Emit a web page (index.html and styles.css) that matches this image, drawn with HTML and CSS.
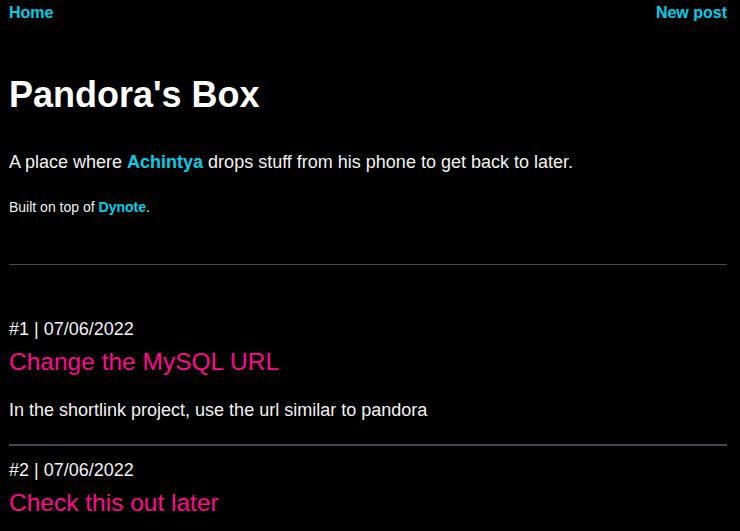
FILE: index.html
```html
<!DOCTYPE html>
<html>
<head>
<meta charset="utf-8">
<link rel="stylesheet" href="styles.css">
</head>
<body>
<div class="page">
  <nav class="nav">
    <a href="#">Home</a>
    <a href="#">New post</a>
  </nav>
  <header class="header">
    <h1 class="title">Pandora's Box</h1>
    <p class="tagline">A place where <a href="#">Achintya</a> drops stuff from his phone to get back to later.</p>
    <p class="built">Built on top of <a href="#">Dynote</a>.</p>
  </header>
  <hr class="rule">
  <main class="posts">
    <article class="post">
      <div class="meta">#1 | 07/06/2022</div>
      <h2 class="post-title">Change the MySQL URL</h2>
      <p class="post-body">In the shortlink project, use the url similar to pandora</p>
    </article>
    <article class="post">
      <div class="meta">#2 | 07/06/2022</div>
      <h2 class="post-title">Check this out later</h2>
    </article>
  </main>
</div>
</body>
</html>
```
FILE: styles.css
```css
html, body {
  margin: 0;
  padding: 0;
  background: #000;
}
body {
  font-family: "Liberation Sans", Arial, Helvetica, sans-serif;
  color: #f2f2f2;
}
a {
  color: #00cfeb;
  text-decoration: none;
  font-weight: bold;
}
.page {
  padding: 4px 13px 0 9px;
}
.nav {
  display: flex;
  justify-content: space-between;
  font-size: 16px;
  line-height: 18px;
}
.header {
  padding-top: 52px;
}
.title {
  margin: 0;
  font-size: 36px;
  line-height: 42px;
  font-weight: bold;
  color: #fff;
}
.tagline {
  margin: 36px 0 0;
  font-size: 18px;
  line-height: 21px;
}
.built {
  margin: 26px 0 0;
  font-size: 14px;
  line-height: 16px;
}
.rule {
  margin: 49px 0 0;
  border: 0;
  height: 1px;
  background: #48474f;
}
.posts {
  padding-top: 54px;
}
.post {
  border-bottom: 2px solid #48474f;
}
.post:last-child {
  border-bottom: 0;
}
.meta {
  font-size: 18px;
  line-height: 21px;
}
.post-title {
  margin: 8px 0 0;
  font-size: 24.5px;
  line-height: 28px;
  font-weight: normal;
  color: #ff0a8f;
}
.post-body {
  margin: 24px 0 0;
  padding-bottom: 23px;
  font-size: 18px;
  line-height: 21px;
}
.post + .post {
  padding-top: 14px;
}
```
